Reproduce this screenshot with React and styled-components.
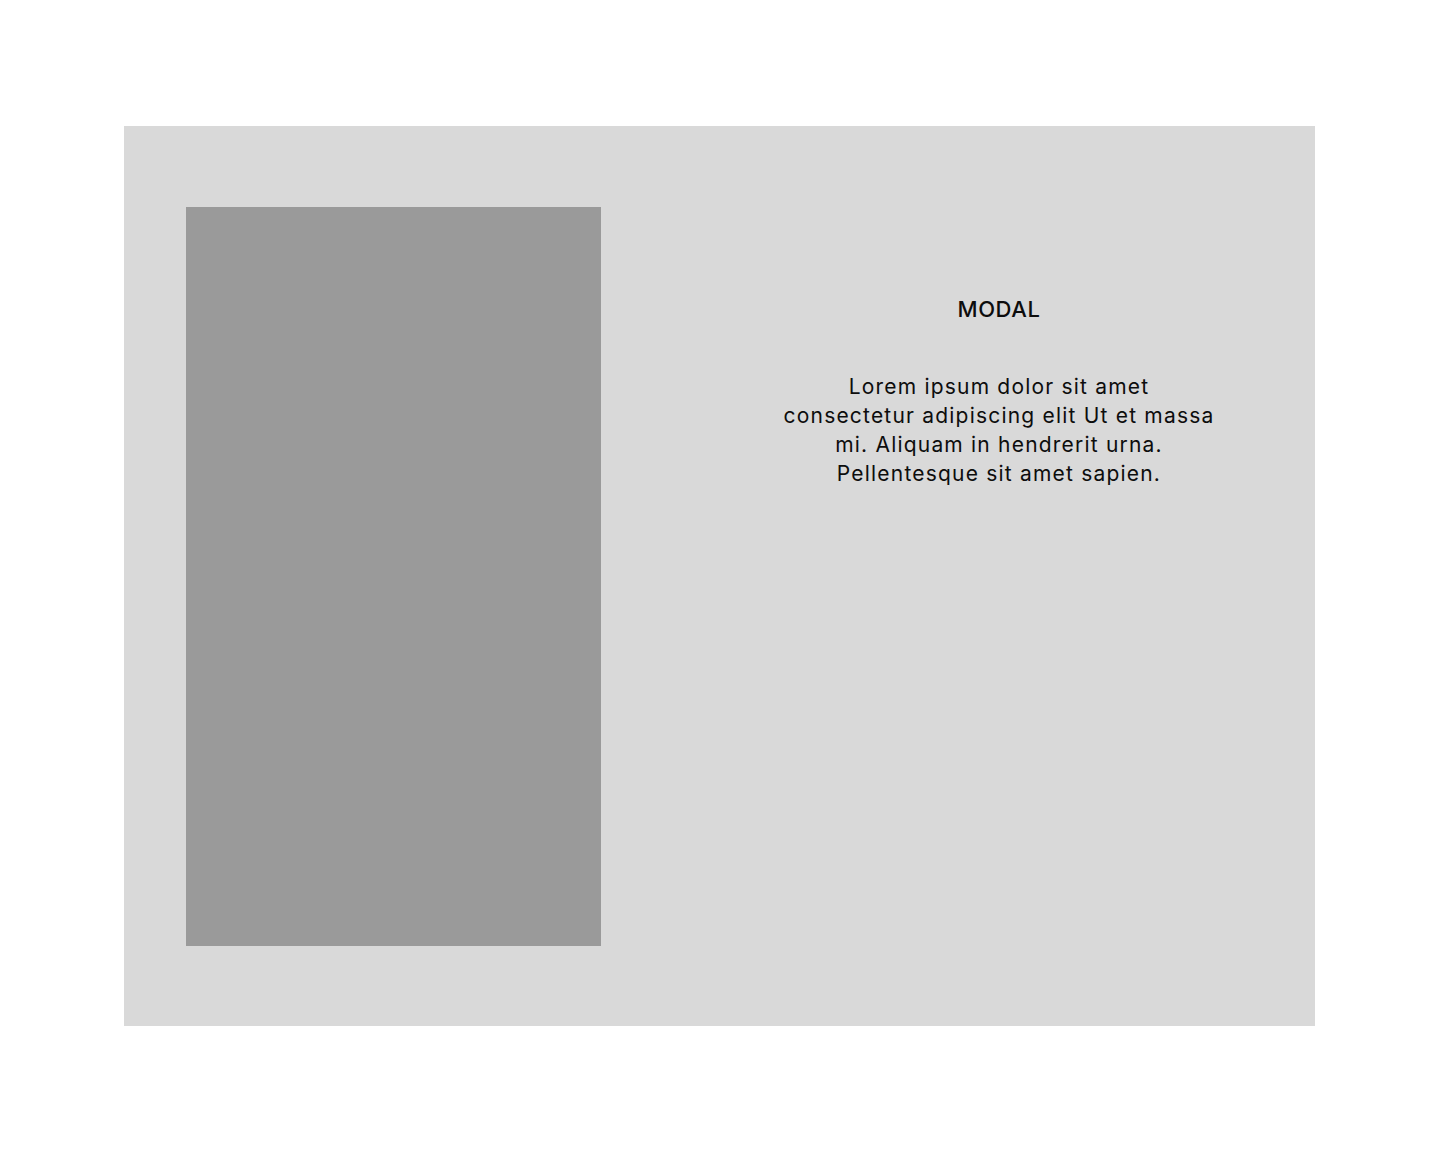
import React from 'react';
import styled, { createGlobalStyle } from 'styled-components';

const GlobalStyle = createGlobalStyle`
  * {
    box-sizing: border-box;
  }

  body {
    margin: 0;
    background: #ffffff;
    font-family: Inter, "Noto Sans", sans-serif;
    color: #0d0d0d;
  }
`;

const Page = styled.main`
  width: 1440px;
  min-height: 1152px;
  padding: 126px 125px 126px 124px;
`;

const Modal = styled.section`
  width: 1191px;
  height: 900px;
  background: #d9d9d9;
  display: flex;
  align-items: flex-start;
  padding: 81px 62px 80px 62px;
`;

const ImagePlaceholder = styled.div`
  width: 415px;
  height: 739px;
  flex-shrink: 0;
  background: #9a9a9a;
`;

const Content = styled.div`
  width: 508px;
  margin-left: auto;
  display: flex;
  flex-direction: column;
  align-items: center;
  text-align: center;
  padding-top: 88px;
`;

const Title = styled.h2`
  margin: 0;
  font-size: 22px;
  font-weight: 500;
  line-height: 29px;
  letter-spacing: 0.6px;
`;

const Body = styled.p`
  margin: 48px 0 0;
  max-width: 480px;
  font-size: 21px;
  font-weight: 400;
  line-height: 29px;
  letter-spacing: 1.2px;
`;

function App() {
  return (
    <>
      <GlobalStyle />
      <Page>
        <Modal>
          <ImagePlaceholder />
          <Content>
            <Title>MODAL</Title>
            <Body>
              Lorem ipsum dolor sit amet
              <br />
              consectetur adipiscing elit Ut et massa
              <br />
              mi. Aliquam in hendrerit urna.
              <br />
              Pellentesque sit amet sapien.
            </Body>
          </Content>
        </Modal>
      </Page>
    </>
  );
}

export default App;
